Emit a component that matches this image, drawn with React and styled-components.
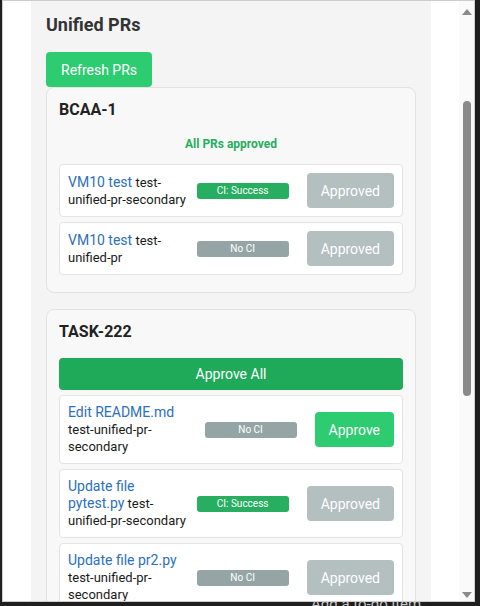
import React from 'react';
import styled, { createGlobalStyle } from 'styled-components';

const GlobalStyle = createGlobalStyle`
	html, body {
		margin: 0;
		padding: 0;
		background-color: #1f1f1f;
		font-family: 'Segoe UI', Roboto, 'Liberation Sans', sans-serif;
	}
	* {
		box-sizing: border-box;
	}
`;

const Desktop = styled.div`
	width: 480px;
	height: 606px;
	display: flex;
	flex-direction: column;
	overflow: hidden;
`;

const Window = styled.div`
	display: flex;
	width: 473px;
	height: 602px;
	margin-left: 2px;
	background-color: #ffffff;
	border: 1px solid #cdcdcd;
	overflow: hidden;
`;

const Viewport = styled.div`
	flex: 1;
	display: flex;
	justify-content: center;
	overflow: hidden;
`;

const Panel = styled.div`
	width: 400px;
	min-height: 100%;
	padding: 12px 15px 20px;
	background-color: #f4f4f4;
`;

const Title = styled.h2`
	margin: 0 0 15px;
	font-size: 18px;
	line-height: 24px;
	font-weight: 700;
	color: #333333;
`;

const Button = styled.button`
	display: inline-block;
	height: ${({ tall }) => (tall ? '35px' : '32px')};
	padding: 0 ${({ compact }) => (compact ? '14px' : '15px')};
	font-family: inherit;
	font-size: 14px;
	color: #ffffff;
	background-color: ${({ color }) => color || '#2ecc71'};
	opacity: ${({ disabled }) => (disabled ? 0.7 : 1)};
	border: none;
	border-radius: 4px;
	cursor: pointer;
	flex-shrink: 0;
`;

const ApproveAll = styled(Button)`
	display: block;
	width: 100%;
	margin-bottom: 5px;
	background-color: #1eaa58;
`;

const Card = styled.div`
	margin-bottom: 16px;
	padding: 12px;
	background-color: #f8f8f8;
	border: 1px solid #e2e2e2;
	border-radius: 8px;
`;

const CardTitle = styled.h3`
	margin: 0 0 16px;
	font-size: 16px;
	line-height: 20px;
	font-weight: 700;
	color: #222222;
`;

const Message = styled.div`
	margin-bottom: 12px;
	font-size: 12px;
	line-height: 16px;
	font-weight: 700;
	text-align: center;
	color: #27ae60;
`;

const Item = styled.div`
	display: flex;
	align-items: center;
	margin-bottom: 5px;
	padding: 8px;
	background-color: #ffffff;
	border: 1px solid #e4e4e4;
	border-radius: 4px;
`;

const Info = styled.div`
	flex: 1;
	min-width: 0;
	font-size: 13px;
	line-height: 17px;
	color: #1a1a1a;
`;

const PrLink = styled.a`
	font-size: 14px;
	color: #2c70c0;
	text-decoration: none;
`;

const Badge = styled.span`
	width: 92px;
	height: 16px;
	margin: 0 18px 0 8px;
	font-size: 10px;
	line-height: 16px;
	text-align: center;
	color: #ffffff;
	background-color: ${({ success }) => (success ? '#27ae60' : '#95a5a6')};
	border-radius: 3px;
	flex-shrink: 0;
`;

const ScrollTrack = styled.div`
	width: 15px;
	display: flex;
	flex-direction: column;
	align-items: center;
	padding: 8px 0 3px;
	background-color: #fafafa;
`;

const Arrow = styled.div`
	width: 0;
	height: 0;
	border-left: 5px solid transparent;
	border-right: 5px solid transparent;
	${({ down }) => (down ? 'border-top: 6px solid #8a8a8a;' : 'border-bottom: 6px solid #8a8a8a;')}
`;

const Thumb = styled.div`
	width: 8px;
	height: 295px;
	margin-top: 86px;
	background-color: #8a8a8a;
	border-radius: 4px;
`;

const Spacer = styled.div`
	flex: 1;
`;

const Strip = styled.div`
	height: 4px;
	padding-left: 311px;
	overflow: hidden;
`;

const StripText = styled.div`
	margin-top: -7px;
	font-size: 15px;
	line-height: 18px;
	color: #c8c8c8;
`;

const groups = [
	{
		key: 'BCAA-1',
		allApproved: true,
		prs: [
			{ title: 'VM10 test', repo: 'test-unified-pr-secondary', ci: 'success', approved: true },
			{ title: 'VM10 test', repo: 'test-unified-pr', ci: null, approved: true },
		],
	},
	{
		key: 'TASK-222',
		allApproved: false,
		prs: [
			{ title: 'Edit README.md', repo: 'test-unified-pr-secondary', ci: null, approved: false },
			{ title: 'Update file pytest.py', repo: 'test-unified-pr-secondary', ci: 'success', approved: true },
			{ title: 'Update file pr2.py', repo: 'test-unified-pr-secondary', ci: null, approved: true },
		],
	},
];

const PrRow = ({ pr }) => (
	<Item>
		<Info>
			<PrLink href='#'>{pr.title}</PrLink> {pr.repo}
		</Info>
		<Badge success={pr.ci === 'success'}>{pr.ci === 'success' ? 'CI: Success' : 'No CI'}</Badge>
		{pr.approved ? (
			<Button tall compact disabled color='#95a5a6'>
				Approved
			</Button>
		) : (
			<Button tall compact>
				Approve
			</Button>
		)}
	</Item>
);

const App = () => {
	return (
		<Desktop>
			<GlobalStyle />
			<Window>
				<Viewport>
					<Panel>
						<Title>Unified PRs</Title>
						<Button tall>Refresh PRs</Button>
						{groups.map((group) => (
							<Card key={group.key}>
								<CardTitle>{group.key}</CardTitle>
								{group.allApproved ? <Message>All PRs approved</Message> : <ApproveAll>Approve All</ApproveAll>}
								{group.prs.map((pr, i) => (
									<PrRow key={i} pr={pr} />
								))}
							</Card>
						))}
					</Panel>
				</Viewport>
				<ScrollTrack>
					<Arrow />
					<Thumb />
					<Spacer />
					<Arrow down />
				</ScrollTrack>
			</Window>
			<Strip>
				<StripText>Add a to-do item</StripText>
			</Strip>
		</Desktop>
	);
};

export default App;
